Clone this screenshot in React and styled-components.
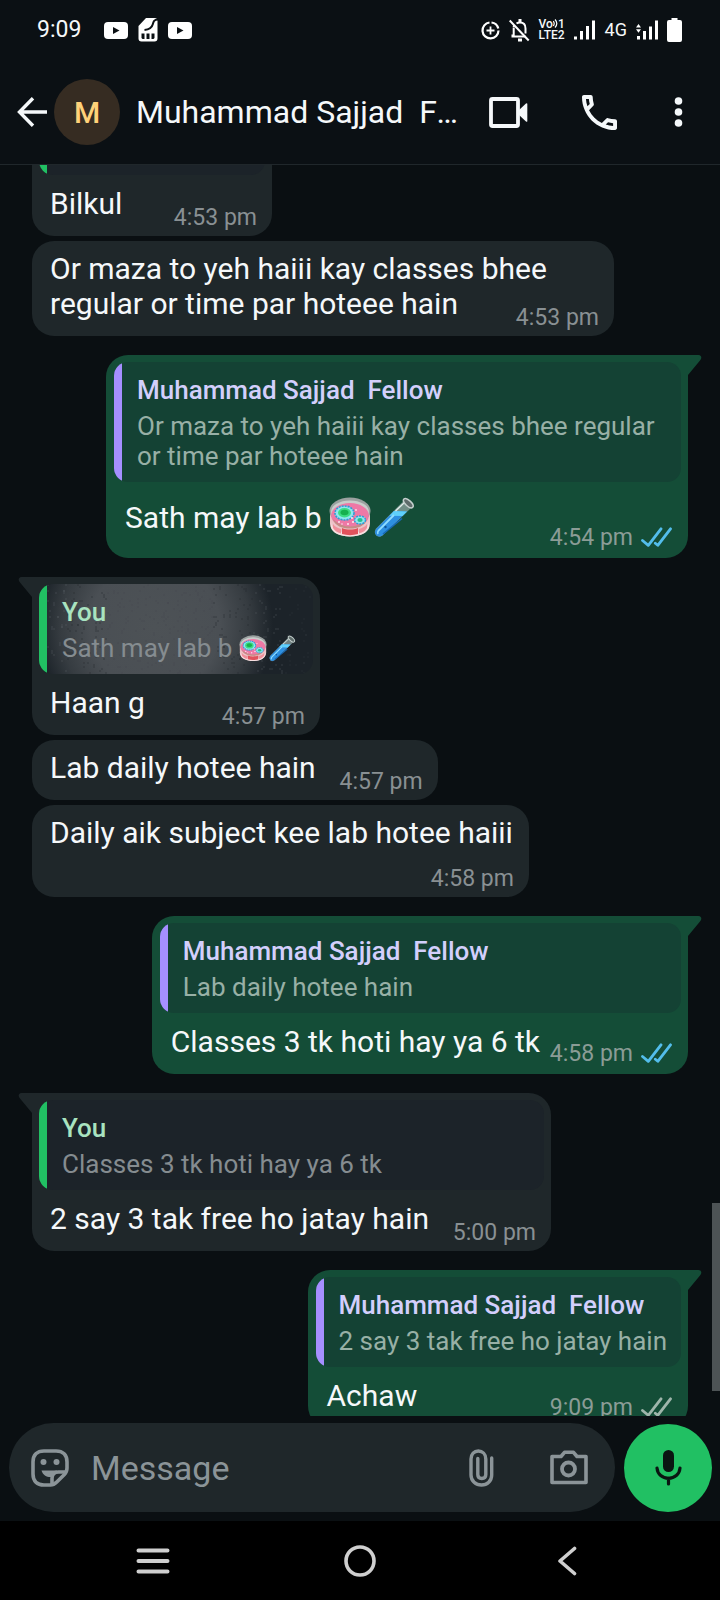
import React, { useLayoutEffect, useRef } from "react";
import styled, { createGlobalStyle, css } from "styled-components";

const GlobalStyle = createGlobalStyle`
  *, *::before, *::after { box-sizing: border-box; }
  body {
    margin: 0;
    background: #0a0f12;
    font-family: Roboto, "Liberation Sans", sans-serif;
    color: #f5f8fa;
  }
  button { border: 0; padding: 0; background: none; color: inherit; font: inherit; cursor: pointer; }
`;

const Screen = styled.div`
  display: flex;
  flex-direction: column;
  height: 100vh;
  overflow: hidden;
`;

/* ---------- status bar ---------- */

const StatusBar = styled.div`
  flex: none;
  display: flex;
  align-items: center;
  justify-content: space-between;
  height: 60px;
  padding: 0 38px 0 37px;
  background: #0b1014;
`;

const StatusGroup = styled.div`
  display: flex;
  align-items: center;
  gap: 10px;
`;

const StatusIcons = styled(StatusGroup)`
  gap: 9px;
`;

const Clock = styled.time`
  margin-right: 13px;
  font-size: 23px;
  line-height: 28px;
`;

const NetworkLabel = styled.span`
  font-size: 18px;
  line-height: 24px;
`;

const VolteLabel = styled.span`
  display: grid;
  width: 26px;
  font-size: 12px;
  font-weight: 500;
  line-height: 11px;
  white-space: nowrap;
`;

/* ---------- header ---------- */

const Header = styled.header`
  flex: none;
  display: flex;
  align-items: center;
  height: 105px;
  padding: 0 33px 0 17px;
  border-bottom: 1px solid #20272b;
  background: #0b1014;
`;

const IconButton = styled.button`
  display: grid;
  place-items: center;
  flex: none;
  svg { display: block; }
`;

const Avatar = styled.div`
  display: grid;
  place-items: center;
  flex: none;
  width: 66px;
  height: 66px;
  margin: 0 16px 0 7px;
  border-radius: 50%;
  background: #362c22;
  color: #ffd279;
  font-size: 30px;
  font-weight: 500;
`;

const Title = styled.h1`
  flex: 1;
  min-width: 0;
  margin: 0;
  padding-right: 30px;
  overflow: hidden;
  font-size: 32px;
  font-weight: 400;
  line-height: 40px;
  white-space: pre;
  text-overflow: ellipsis;
`;

const Actions = styled.div`
  display: flex;
  align-items: center;
  gap: 54px;
`;

/* ---------- conversation ---------- */

const ChatFrame = styled.main`
  position: relative;
  flex: 1;
  min-height: 0;
`;

const ChatScroller = styled.div`
  height: 100%;
  overflow-y: auto;
  scrollbar-width: none;
`;

const MessageList = styled.ol`
  display: flex;
  flex-direction: column;
  margin: 0;
  padding: 0 32px 19px;
  list-style: none;
`;

const ScrollThumb = styled.div`
  position: absolute;
  right: 0;
  bottom: 2%;
  width: 8px;
  height: 15%;
  background: #4d5355;
`;

const Bubble = styled.li`
  position: relative;
  display: grid;
  align-self: ${(p) => (p.$out ? "flex-end" : "flex-start")};
  max-width: 582px;
  margin-top: ${(p) => (p.$first ? "0" : p.$turn ? "19px" : "5px")};
  padding-top: ${(p) => (p.$quoted ? "7px" : "10px")};
  border-radius: 22px;
  background: ${(p) => (p.$out ? "#144d37" : "#1f272a")};
  ${(p) => p.$turn && (p.$out ? css`border-top-right-radius: 0;` : css`border-top-left-radius: 0;`)}
`;

const Tail = styled.svg`
  position: absolute;
  top: 0;
  width: 14px;
  height: 20px;
  fill: ${(p) => (p.$out ? "#144d37" : "#1f272a")};
  ${(p) => (p.$out ? css`left: 100%;` : css`right: 100%; transform: scaleX(-1);`)}
`;

const Quote = styled.blockquote`
  position: relative;
  display: flex;
  flex-direction: column;
  gap: 5px;
  min-width: ${(p) => (p.$wide ? "226px" : "0")};
  margin: ${(p) => (p.$out ? "0 7px 11px 8px" : "0 7px 11px")};
  padding: ${(p) => (p.$out ? "12px 14px 11px 23px" : "12px 16px 11px 23px")};
  overflow: hidden;
  border-radius: 14px;
  background: ${(p) => (p.$out ? "#144234" : "#1c2329")};
  color: ${(p) => (p.$out ? "#98b0a6" : "#858c90")};
  font-size: 26px;
  line-height: 30px;

  &::before {
    content: "";
    position: absolute;
    inset: 0 auto 0 0;
    width: 8px;
    background: ${(p) => (p.$out ? "#a58fff" : "#21c063")};
  }
`;

const QuoteName = styled.cite`
  position: relative;
  color: ${(p) => (p.$out ? "#d3cffc" : "#a9e3c0")};
  font-size: 26px;
  font-style: normal;
  font-weight: 500;
  line-height: 32px;
  white-space: pre-wrap;
`;

const QuoteText = styled.span`
  position: relative;
  min-height: 30px;
`;

const Ripple = styled.svg`
  position: absolute;
  top: 0;
  left: 8px;
  width: 265px;
  height: 100%;
`;

const Body = styled.p`
  grid-column: 1;
  grid-row: ${(p) => (p.$quoted ? 2 : 1)};
  margin: 0;
  padding: ${(p) => (p.$out ? "0 16px 15px 19px" : "0 16px 15px 18px")};
  font-size: 30px;
  line-height: 35px;
`;

/* keeps room at the end of the last line for the time stamp */
const MetaSpace = styled.span`
  display: inline-block;
  width: ${(p) => (p.$out ? "132px" : "106px")};
`;

const Meta = styled.div`
  grid-column: 1;
  grid-row: ${(p) => (p.$stacked || p.$quoted ? 2 : 1)};
  align-self: end;
  justify-self: end;
  display: flex;
  align-items: center;
  gap: 8px;
  margin: ${(p) => (p.$out ? "0 16px 6px" : "0 15px 4px")};
  color: ${(p) => (p.$out ? "#8b9c96" : "#899093")};
  font-size: 23px;
  line-height: 28px;
`;

const Emoji = styled.svg`
  width: ${(p) => (p.$small ? "28px" : "42px")};
  height: ${(p) => (p.$small ? "27px" : "41px")};
  margin: ${(p) => (p.$small ? "0 1px 0 0" : "4px 2px 5px 0")};
  vertical-align: ${(p) => (p.$small ? "-5px" : "-15px")};
`;

/* ---------- composer ---------- */

const Composer = styled.form`
  flex: none;
  display: flex;
  align-items: center;
  gap: 9px;
  padding: 7px 8px 9px 9px;
  background: #0a0f12;
`;

const Field = styled.div`
  flex: 1;
  min-width: 0;
  display: flex;
  align-items: center;
  height: 89px;
  padding: 0 27px 0 22px;
  border-radius: 45px;
  background: #1f272a;
  color: #8b9498;
`;

const TextInput = styled.input`
  flex: 1;
  min-width: 0;
  margin: 0 22px;
  padding: 0;
  border: 0;
  outline: 0;
  background: none;
  color: #f5f8fa;
  font-family: inherit;
  font-size: 34px;
  line-height: 42px;
  &::placeholder { color: #8b9498; opacity: 1; }
`;

const FieldActions = styled.div`
  display: flex;
  align-items: center;
  gap: 56px;
`;

const MicButton = styled(IconButton)`
  width: 88px;
  height: 88px;
  border-radius: 50%;
  background: #21c063;
`;

/* ---------- system navigation ---------- */

const NavBar = styled.nav`
  flex: none;
  display: flex;
  height: 79px;
  padding: 0 50px;
  background: #000;
  color: #cfcfcf;
`;

const NavButton = styled(IconButton)`
  flex: 1;
`;

/* ---------- drawings ---------- */

const YouTubeIcon = () => (
  <svg width="24" height="17" viewBox="0 0 24 17" aria-hidden="true">
    <rect width="24" height="17" rx="4" fill="#fff" />
    <path d="M9 5v7l6.500-3.500z" fill="#0b1014" />
  </svg>
);

const CardIcon = () => (
  <svg width="20" height="24" viewBox="0 0 20 24" aria-hidden="true">
    <path d="M8 0h8.500a3 3 0 0 1 3 3v17.500a3 3 0 0 1-3 3h-13a3 3 0 0 1-3-3V8z" fill="#fff" />
    <path d="M20 1.500c-4 .2-4.500 2-5.300 5-.8 3-2.700 5-8.200 5.500" fill="none" stroke="#0b1014" strokeWidth="2" />
    <path d="M3.500 15.500h3v5.500h-2l-1-1zM8.500 15.500h3v5.500h-3zM13.500 15.500h3v4.500l-1 1h-2z" fill="#0b1014" />
  </svg>
);

const DataSaverIcon = () => (
  <svg width="19" height="19" viewBox="0 0 19 19" fill="none" stroke="#fff" aria-hidden="true">
    <path d="M10.500 1.500a8 8 0 0 1 6.800 6M17.500 9.500a8 8 0 1 1-9-8" strokeWidth="2.200" />
    <path d="M9.500 5.500v8M5.500 9.500h8" strokeWidth="1.800" />
  </svg>
);

const BellOffIcon = () => (
  <svg width="21" height="23" viewBox="0 0 21 23" fill="none" stroke="#fff" strokeWidth="2" aria-hidden="true">
    <path d="M7.500 4.500c1-.7 2-1 3.500-1 3.500 0 5.500 2.500 5.500 6v5M4.700 8.500v8H2.500M4.700 8c0-1 .2-1.500.5-2M2.500 17.500h14" />
    <path d="M.7 1.500l19 20" />
    <path d="M11 0v3M9 21h4" strokeWidth="3" />
  </svg>
);

const VoiceWaves = () => (
  <svg width="5" height="9" viewBox="0 0 5 9" fill="none" stroke="#fff" strokeWidth="1.200" aria-hidden="true">
    <path d="M.3 2q1.800 2.500 0 5M2 .5q3.600 4 0 8" />
  </svg>
);

const SignalIcon = ({ data }) => (
  <svg width="22" height="20" viewBox="0 0 22 20" fill="#fff" aria-hidden="true">
    {data ? (
      <path d="M0 7.500l2.500-3.500L5 7.500zM0 9.200h5l-2.500 3.500zM1 16h3v3.500H1zM7 11h3v8.500H7zM13 6.500h3v13h-3zM19 .5h3v19h-3z" />
    ) : (
      <path d="M0 16.500h3v3H0zM6 11h3v8.500H6zM12 6h3v13.500h-3zM18 .5h3v19h-3z" />
    )}
  </svg>
);

const BatteryIcon = () => (
  <svg width="15" height="24" viewBox="0 0 15 24" fill="#fff" aria-hidden="true">
    <path d="M4.500 0h6v2H13a2 2 0 0 1 2 2v18a2 2 0 0 1-2 2H2a2 2 0 0 1-2-2V4a2 2 0 0 1 2-2h2.500z" />
  </svg>
);

const BackArrow = () => (
  <svg width="30" height="30" viewBox="0 0 30 30" fill="none" stroke="currentColor" strokeWidth="3.400" aria-hidden="true">
    <path d="M16 1.300L2.500 15 16 28.700M2.500 15h27.500" />
  </svg>
);

const VideoIcon = () => (
  <svg width="39" height="31" viewBox="0 0 39 31" aria-hidden="true">
    <rect x="2" y="2" width="27" height="27" rx="1.500" fill="none" stroke="currentColor" strokeWidth="3.800" />
    <path d="M29 14l8-7.500q1.300-.8 1.300.6v16.800q0 1.400-1.300.6L29 17z" fill="currentColor" />
  </svg>
);

const PhoneIcon = () => (
  <svg width="35" height="35" viewBox="3 3 18 18" fill="currentColor" aria-hidden="true">
    <path d="M6.540 5c.06.89.21 1.760.45 2.590l-1.200 1.200c-.41-1.200-.67-2.470-.76-3.790h1.510m9.860 12.020c.85.24 1.720.39 2.600.45v1.490c-1.320-.09-2.590-.35-3.800-.75l1.200-1.190M7.500 3H4c-.55 0-1 .45-1 1 0 9.390 7.610 17 17 17 .55 0 1-.45 1-1v-3.490c0-.55-.45-1-1-1-1.240 0-2.450-.2-3.570-.57-.1-.04-.21-.05-.31-.05-.26 0-.51.1-.71.29l-2.200 2.200c-2.830-1.450-5.150-3.760-6.590-6.590l2.200-2.200c.28-.28.36-.67.25-1.020C8.700 6.450 8.500 5.250 8.500 4c0-.55-.45-1-1-1z" />
  </svg>
);

const MoreIcon = () => (
  <svg width="16" height="32" viewBox="0 0 16 32" fill="currentColor" aria-hidden="true">
    <circle cx="7.500" cy="5" r="3.800" />
    <circle cx="7.500" cy="16" r="3.800" />
    <circle cx="7.500" cy="27" r="3.800" />
  </svg>
);

const Ticks = ({ read }) => (
  <svg
    width="31" height="22" viewBox="0 0 31 22" fill="none"
    stroke={read ? "#53bdeb" : "#9fb5ab"} strokeWidth="2.800" strokeLinecap="round" strokeLinejoin="round"
    role="img" aria-label={read ? "Read" : "Delivered"}
  >
    <path d="M1.500 13.500l5.800 4.800L20 1.800M14.300 16.200l2.500 2.100L29.500 1.800" />
  </svg>
);

const PetriDish = ({ small }) => (
  <Emoji $small={small} viewBox="0 0 42 41" role="img" aria-label="petri dish">
    <path d="M1 14v13c0 7 9 12.500 20 12.500S41 34 41 27V14z" fill="#ecc4c8" />
    <path d="M2 25c0 7 9 11 19 11s19-4 19-11v5c-1 6-9 9.500-19 9.500S3 36 2 30z" fill="#f6dfe0" />
    <path d="M13 31c5 2 11 2 16 0v6c-5 1.500-11 1.500-16 0z" fill="#e0525c" />
    <path d="M4 27c2 3 5 4 8 5v4.500C8 35.500 5 33 4 31zM38 27c-2 3-5 4-8 5v4.500c4-1 7-3.500 8-5.500z" fill="#f0909c" />
    <ellipse cx="21" cy="14" rx="20.500" ry="13.500" fill="#9ba1a0" />
    <ellipse cx="21" cy="15" rx="19" ry="11.500" fill="#c9cdcb" />
    <ellipse cx="21" cy="18.500" rx="18.800" ry="12.500" fill="#ee78a6" />
    <path d="M4 22c4 4 10 7.500 17 7.500S34 26 38 22c-2 7-9 9.500-17 9.500S6 29 4 22z" fill="#c58c86" />
    <ellipse cx="15.500" cy="16" rx="9.500" ry="7" fill="#8fe6f0" stroke="#2b9fd6" strokeWidth="1.600" strokeDasharray="2 1" />
    <ellipse cx="15.500" cy="15.800" rx="6.500" ry="4.700" fill="#3ddc84" />
    <ellipse cx="15.500" cy="15.500" rx="4" ry="2.800" fill="#16b04e" />
    <ellipse cx="31" cy="23" rx="5.500" ry="4" fill="#8fe6f0" stroke="#2b9fd6" strokeWidth="1.400" strokeDasharray="2 1" />
    <ellipse cx="31" cy="23" rx="2.600" ry="1.900" fill="#25bf8a" />
    <g fill="#ffe3ec">
      <circle cx="24" cy="25" r="1.100" /><circle cx="19" cy="27" r="1" /><circle cx="10" cy="25" r="1" />
      <circle cx="27" cy="13" r=".9" /><circle cx="23" cy="21" r="1" /><circle cx="13" cy="27" r=".8" />
    </g>
  </Emoji>
);

const TestTube = ({ small }) => (
  <Emoji $small={small} viewBox="0 0 42 41" role="img" aria-label="test tube">
    <path d="M31 3.500l7.500 7L9.500 38.500q-3.500 2.500-6.300-.2-2.700-2.800-.3-6.600z" fill="#8fa3a0" fillOpacity=".75" />
    <path d="M21 14l13 .6L9.500 38.300q-3.500 2.500-6.200 0-2.500-2.600-.3-6.300z" fill="#2d8fe0" />
    <path d="M21 14l13 .6-4.500 4.400-13-.3z" fill="#5fd0fb" />
    <path d="M21 18L5.500 33.500q-1.500 2-.5 3.500" fill="none" stroke="#8fdcff" strokeWidth="1.800" />
    <path d="M29 21.500L10 37" stroke="#1668b5" strokeWidth="1.600" />
    <circle cx="12.500" cy="30" r="1.200" fill="#0d5397" />
    <path d="M32 5l-9.500 9" stroke="#e1eeeb" strokeWidth="1.400" />
    <ellipse cx="35.300" cy="6.200" rx="6" ry="2.800" transform="rotate(43 35.300 6.200)" fill="#5e6b6a" stroke="#c4cfcd" strokeWidth="1.500" />
  </Emoji>
);

/* sparkling touch ripple over a pressed quote */
const specks = Array.from({ length: 420 }, (_, i) => {
  const a = Math.abs(Math.sin(i * 12.9898) * 43758.5453) % 1;
  const b = Math.abs(Math.sin(i * 78.233) * 12543.123) % 1;
  const x = Math.floor(a * 132) * 2;
  const far = Math.abs(x - 112) / 132;
  return { x, y: Math.floor(b * 45) * 2, dark: far < 0.7, o: far < 0.4 ? 0.04 : far < 0.7 ? 0.22 : far < 0.95 ? 0.16 : 0.06 };
});

const TouchRipple = () => (
  <Ripple viewBox="0 0 265 90" preserveAspectRatio="none" aria-hidden="true">
    <defs>
      <radialGradient id="ripple" gradientUnits="userSpaceOnUse" cx="108" cy="42" r="118">
        <stop offset="0" stopColor="#4d5256" />
        <stop offset=".55" stopColor="#4a4f54" />
        <stop offset=".8" stopColor="#363c41" />
        <stop offset="1" stopColor="#1c2329" />
      </radialGradient>
    </defs>
    <rect width="265" height="90" fill="url(#ripple)" />
    {specks.map((s, i) => (
      <rect key={i} x={s.x} y={s.y} width="2" height="2" fill={s.dark ? "#20262b" : "#6a7075"} opacity={s.o} />
    ))}
  </Ripple>
);

const StickerIcon = () => (
  <svg width="38" height="38" viewBox="0 0 38 38" fill="none" stroke="currentColor" strokeWidth="3.600" aria-hidden="true">
    <path d="M13 2h12c7 0 11 4 11 11v6c0 3-.8 4.600-2.600 6.400l-7.600 7.600c-1.800 1.800-3.500 3-6.300 3H13C6 36 2 32 2 25V13C2 6 6 2 13 2z" />
    <path d="M21 35v-5.500c0-4 2-6.500 6.500-6.500H36" />
    <path d="M10.500 21.500h16c-3 1.500-5 3.500-5.800 6.500-4.500.5-8.700-1.500-10.200-6.500z" fill="currentColor" stroke="none" />
    <circle cx="12.500" cy="13" r="3" fill="currentColor" stroke="none" />
    <circle cx="25.500" cy="13" r="3" fill="currentColor" stroke="none" />
  </svg>
);

const ClipIcon = () => (
  <svg width="25" height="38" viewBox="0 0 25 38" fill="none" stroke="currentColor" strokeWidth="3.400" strokeLinecap="round" aria-hidden="true">
    <path d="M22.700 9v17c0 6-4.500 10-10.200 10S2 32 2 26V10c0-5 3.200-8 7.300-8s7.500 3 7.500 8v15.500c0 2.500-1.700 4-4 4s-4-1.500-4-4V9.500" />
  </svg>
);

const CameraIcon = () => (
  <svg width="38" height="35" viewBox="0 0 38 35" fill="none" stroke="currentColor" strokeWidth="3.600" strokeLinejoin="round" aria-hidden="true">
    <path d="M2 6.500h9l3.500-4.200h9L27 6.500h9v26H2z" />
    <circle cx="18.500" cy="19" r="6.500" strokeWidth="3.800" />
  </svg>
);

const MicIcon = () => (
  <svg width="27" height="37" viewBox="0 0 27 37" aria-hidden="true">
    <rect x="8" y="1" width="11" height="22" rx="5.500" fill="#0a1512" />
    <path d="M2 19c.5 6.500 5.500 10.300 11.500 10.300S24.500 25.500 25 19M13.500 29v6" fill="none" stroke="#0a1512" strokeWidth="3.200" strokeLinecap="round" />
  </svg>
);

/* ---------- data ---------- */

const CONTACT = "Muhammad Sajjad  Fellow";
const LAB = [PetriDish, TestTube];

const messages = [
  { text: "Bilkul", time: "4:53 pm", quote: { wide: true, name: "", text: "" } },
  { text: "Or maza to yeh haiii kay classes bhee regular or time par hoteee hain", time: "4:53 pm" },
  {
    out: true, turn: true, read: true, text: "Sath may lab b", emoji: LAB, time: "4:54 pm",
    quote: { name: CONTACT, text: "Or maza to yeh haiii kay classes bhee regular or time par hoteee hain" },
  },
  { turn: true, text: "Haan g", time: "4:57 pm", quote: { name: "You", text: "Sath may lab b", emoji: LAB, pressed: true } },
  { text: "Lab daily hotee hain", time: "4:57 pm" },
  { text: "Daily aik subject kee lab hotee haiii", time: "4:58 pm", stacked: true },
  { out: true, turn: true, read: true, text: "Classes 3 tk hoti hay ya 6 tk", time: "4:58 pm", quote: { name: CONTACT, text: "Lab daily hotee hain" } },
  { turn: true, text: "2 say 3 tak free ho jatay hain", time: "5:00 pm", quote: { name: "You", text: "Classes 3 tk hoti hay ya 6 tk" } },
  { out: true, turn: true, text: "Achaw", time: "9:09 pm", quote: { name: CONTACT, text: "2 say 3 tak free ho jatay hain" } },
];

const Rich = ({ text, emoji, small }) => (
  <>
    {text}
    {emoji && " "}
    {emoji && emoji.map((Glyph, i) => <Glyph key={i} small={small} />)}
  </>
);

const Message = ({ out, turn, first, read, text, emoji, time, stacked, quote }) => (
  <Bubble $out={out} $turn={turn} $first={first} $quoted={!!quote}>
    {turn && (
      <Tail $out={out} viewBox="0 0 14 20" aria-hidden="true">
        <path d="M0 0h10.500q3 .3 2.800 3-.2 1.300-1.300 2.500L0 20z" />
      </Tail>
    )}
    {quote && (
      <Quote $out={out} $wide={quote.wide}>
        {quote.pressed && <TouchRipple />}
        <QuoteName $out={out}>{quote.name || "\u00a0"}</QuoteName>
        <QuoteText><Rich text={quote.text} emoji={quote.emoji} small /></QuoteText>
      </Quote>
    )}
    <Body $out={out} $quoted={!!quote}>
      <Rich text={text} emoji={emoji} />
      {!stacked && <MetaSpace $out={out} />}
    </Body>
    <Meta $out={out} $stacked={stacked} $quoted={!!quote}>
      <time>{time}</time>
      {out && <Ticks read={read} />}
    </Meta>
  </Bubble>
);

export default function App() {
  const scroller = useRef(null);

  useLayoutEffect(() => {
    scroller.current.scrollTop = 87;
  }, []);

  return (
    <Screen>
      <GlobalStyle />
      <StatusBar>
        <StatusGroup>
          <Clock>9:09</Clock>
          <YouTubeIcon />
          <CardIcon />
          <YouTubeIcon />
        </StatusGroup>
        <StatusIcons>
          <DataSaverIcon />
          <BellOffIcon />
          <VolteLabel>
            <span>Vo<VoiceWaves />1</span>
            <span>LTE2</span>
          </VolteLabel>
          <SignalIcon />
          <NetworkLabel>4G</NetworkLabel>
          <SignalIcon data />
          <BatteryIcon />
        </StatusIcons>
      </StatusBar>

      <Header>
        <IconButton aria-label="Back"><BackArrow /></IconButton>
        <Avatar>M</Avatar>
        <Title>{CONTACT}</Title>
        <Actions>
          <IconButton aria-label="Video call"><VideoIcon /></IconButton>
          <IconButton aria-label="Voice call"><PhoneIcon /></IconButton>
          <IconButton aria-label="More options"><MoreIcon /></IconButton>
        </Actions>
      </Header>

      <ChatFrame>
        <ChatScroller ref={scroller}>
          <MessageList>
            {messages.map((m, i) => <Message key={i} first={i === 0} {...m} />)}
          </MessageList>
        </ChatScroller>
        <ScrollThumb />
      </ChatFrame>

      <Composer onSubmit={(e) => e.preventDefault()}>
        <Field>
          <IconButton type="button" aria-label="Stickers"><StickerIcon /></IconButton>
          <TextInput type="text" placeholder="Message" aria-label="Message" />
          <FieldActions>
            <IconButton type="button" aria-label="Attach"><ClipIcon /></IconButton>
            <IconButton type="button" aria-label="Camera"><CameraIcon /></IconButton>
          </FieldActions>
        </Field>
        <MicButton type="button" aria-label="Record voice message"><MicIcon /></MicButton>
      </Composer>

      <NavBar aria-label="System">
        <NavButton aria-label="Recent apps">
          <svg width="34" height="26" viewBox="0 0 34 26" stroke="currentColor" strokeWidth="4" strokeLinecap="round" aria-hidden="true">
            <path d="M2.500 2.500h29M2.500 13h29M2.500 23.500h29" />
          </svg>
        </NavButton>
        <NavButton aria-label="Home">
          <svg width="32" height="32" viewBox="0 0 32 32" fill="none" stroke="currentColor" strokeWidth="3.600" aria-hidden="true">
            <circle cx="16" cy="16" r="14" />
          </svg>
        </NavButton>
        <NavButton aria-label="Go back">
          <svg width="20" height="30" viewBox="0 0 20 30" fill="none" stroke="currentColor" strokeWidth="3.600" strokeLinecap="round" strokeLinejoin="round" aria-hidden="true">
            <path d="M17.500 2.500L3 15l14.500 12.500" />
          </svg>
        </NavButton>
      </NavBar>
    </Screen>
  );
}
